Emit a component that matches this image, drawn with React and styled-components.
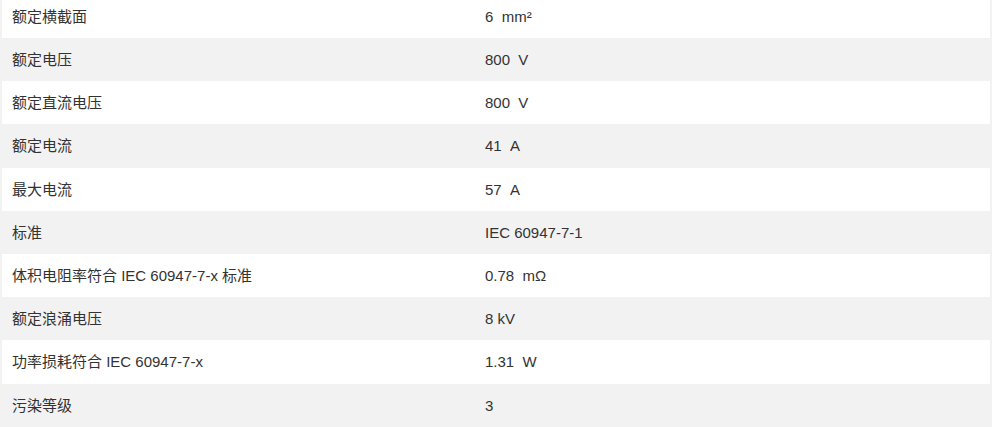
import React from "react";
import styled, { createGlobalStyle } from "styled-components";

const rows = [
  ["额定横截面", "6\u00a0\u00a0mm²"],
  ["额定电压", "800\u00a0\u00a0V"],
  ["额定直流电压", "800\u00a0\u00a0V"],
  ["额定电流", "41\u00a0\u00a0A"],
  ["最大电流", "57\u00a0\u00a0A"],
  ["标准", "IEC 60947-7-1"],
  ["体积电阻率符合 IEC 60947-7-x 标准", "0.78\u00a0\u00a0mΩ"],
  ["额定浪涌电压", "8 kV"],
  ["功率损耗符合 IEC 60947-7-x", "1.31\u00a0\u00a0W"],
  ["污染等级", "3"],
];

function App() {
  return (
    <>
      <GlobalStyle />
      <SpecWrap>
        <SpecTable>
          <tbody>
            {rows.map(([label, value], i) => (
              <SpecRow key={i} $odd={i % 2 === 1}>
                <LabelCell>{label}</LabelCell>
                <ValueCell>{value}</ValueCell>
              </SpecRow>
            ))}
          </tbody>
        </SpecTable>
      </SpecWrap>
    </>
  );
}

export default App;

const GlobalStyle = createGlobalStyle`
  html, body {
    margin: 0;
    padding: 0;
    background: #fff;
  }
  body {
    overflow: hidden;
  }
`;

const SpecWrap = styled.div`
  width: 992px;
  height: 427px;
  overflow: hidden;
`;

const SpecTable = styled.table`
  width: 992px;
  margin-top: -5.2px;
  border-collapse: collapse;
  table-layout: fixed;
  border-left: 2px solid #f2f2f2;
  border-right: 2px solid #f2f2f2;
  color: #333;
  font-size: 15px;
  font-family: "Liberation Sans", Arial, "Noto Sans CJK SC", sans-serif;
`;

const SpecRow = styled.tr`
  background: ${(p) => (p.$odd ? "#f2f2f2" : "#fff")};
`;

const LabelCell = styled.td`
  width: 474px;
  height: 43.2px;
  box-sizing: border-box;
  padding: 0 10px;
  vertical-align: middle;
  line-height: 19px;
`;

const ValueCell = styled.td`
  height: 43.2px;
  box-sizing: border-box;
  padding: 0 10px;
  vertical-align: middle;
  line-height: 19px;
`;
